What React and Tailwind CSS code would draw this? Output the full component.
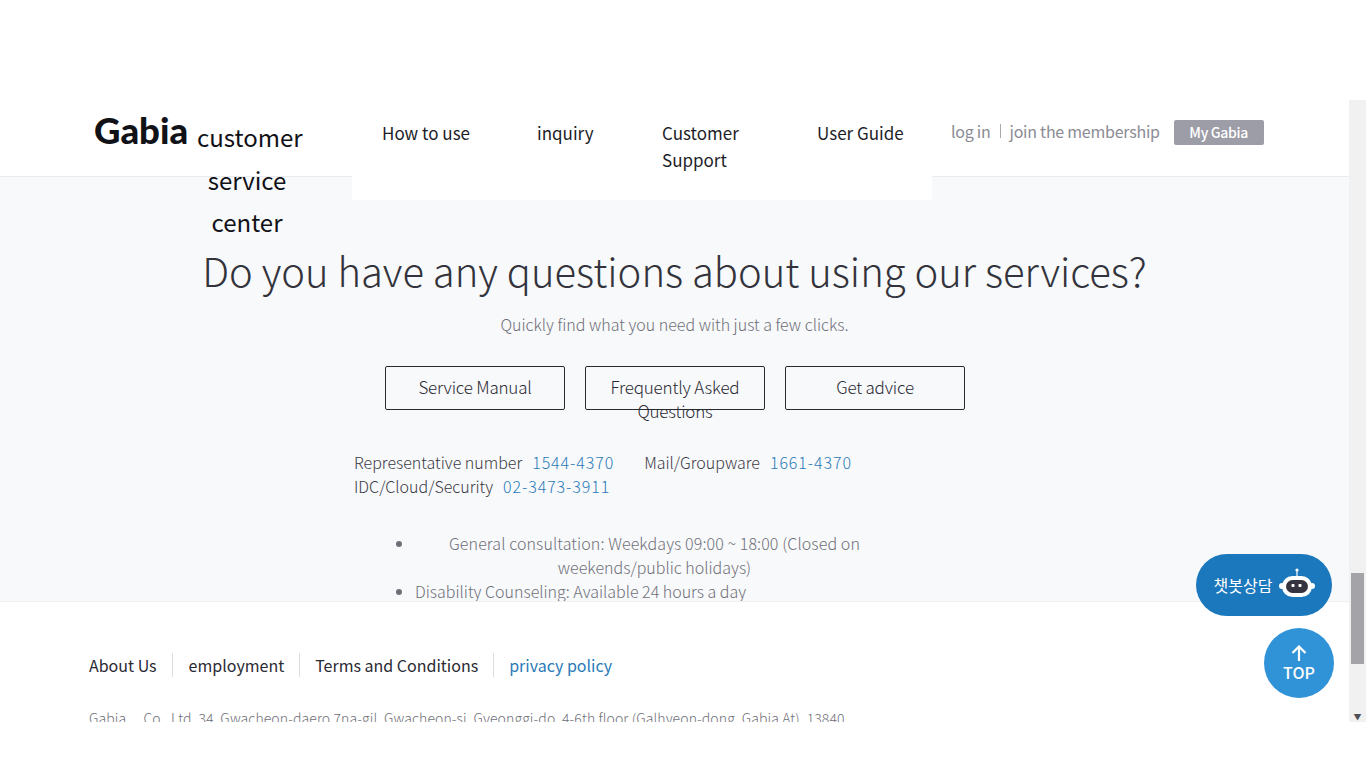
const font = "font-['Noto_Sans_CJK_KR',sans-serif]";

function NavItem({ children, className }) {
  return <a className={`text-[17px] leading-[27px] text-[#1d1d28] ${className}`}>{children}</a>;
}

function ChatBot() {
  return (
    <svg className="-mt-[2px]" width="36" height="32" viewBox="0 0 36 32">
      <line x1="18" y1="2" x2="18" y2="9" stroke="#fff" strokeWidth="1.2" />
      <circle cx="18" cy="2" r="1.6" fill="#fff" />
      <circle cx="3" cy="18" r="3" fill="#fff" />
      <circle cx="33" cy="18" r="3" fill="#fff" />
      <rect x="3" y="8" width="30" height="21" rx="10.5" fill="#fff" />
      <rect x="7" y="12" width="22" height="13" rx="6.5" fill="#35333f" />
      <rect x="12.5" y="16" width="3" height="3" rx="0.8" fill="#fff" />
      <rect x="19.5" y="16" width="3" height="3" rx="0.8" fill="#fff" />
    </svg>
  );
}

export default function App() {
  return (
    <div className={`relative h-screen w-full overflow-hidden bg-white ${font}`}>
      <div className="mt-[100px] flex h-[622px]">
        <div className="min-w-0 flex-1 overflow-hidden">
          <header className="relative z-10 flex h-[77px] items-start border-b border-[#e9ebef] bg-white pl-[94px]">
            <div className="mt-[5px] w-[98px] font-['Lato',sans-serif] text-[36.5px] font-black leading-[50px] text-[#111118]">Gabia</div>
            <div className="mt-[16px] w-[110px] text-center text-[24px] leading-[42.5px] text-[#111118]">
              <span className="block pl-[5px]">customer</span>
              <span className="block">service</span>
              <span className="block">center</span>
            </div>
            <nav className="ml-[50px] flex h-[100px] w-[580px] items-start bg-white pt-[19px] pl-[30px]">
              <NavItem className="w-[155px]">How to use</NavItem>
              <NavItem className="w-[125px]">inquiry</NavItem>
              <NavItem className="mr-[55px] w-[100px]">Customer Support</NavItem>
              <NavItem>User Guide</NavItem>
            </nav>
            <div className="ml-[19px] mt-[20px] flex items-center text-[#8b8b94]">
              <span className="-mt-[2px] text-[16px] leading-[25px] tracking-[-0.25px]">log in</span>
              <span className="mx-[9px] h-[14px] w-px -translate-y-[2px] bg-[#a9a9b0]" />
              <span className="-mt-[2px] mr-[14px] text-[16px] leading-[25px] tracking-[-0.25px]">join the membership</span>
              <span className="flex h-[25px] w-[90px] items-center justify-center rounded-[2px] bg-[#9d9da8] text-[14px] font-medium tracking-[-0.3px] text-white">My Gabia</span>
            </div>
          </header>

          <section className="h-[425px] overflow-hidden border-b border-[#eff0f2] bg-[#f8f9fb] pt-[63px] text-center">
            <h1 className="text-[40px] font-light leading-[60px] text-[#33333c]">Do you have any questions about using our services?</h1>
            <p className="mt-[12px] text-[16px] font-light leading-[24px] text-[#6f6f78]">Quickly find what you need with just a few clicks.</p>

            <div className="mt-[30px] flex justify-center gap-[20px] pl-[1px] text-[17px] leading-[24px] tracking-[-0.2px] text-[#2a2a33]">
              <button className="h-[44px] w-[180px] rounded-[2px] border border-[#2a2a33] pb-[2px] font-light">Service Manual</button>
              <button className="h-[44px] w-[180px] self-start rounded-[2px] border border-[#2a2a33] px-[20px] pt-[8px] align-top font-light">
                <span className="block">Frequently Asked Questions</span>
              </button>
              <button className="h-[44px] w-[180px] rounded-[2px] border border-[#2a2a33] pb-[2px] font-light">Get advice</button>
            </div>

            <div className="ml-[354px] mt-[40px] w-[520px] text-left text-[16px] font-light leading-[24px] text-[#3a3a44]">
              <span>Representative number</span>
              <span className="ml-[10px] tracking-[0.9px] text-[#2a7ab8]">1544-4370</span>
              <span className="ml-[30px]">Mail/Groupware</span>
              <span className="ml-[10px] tracking-[0.9px] text-[#2a7ab8]">1661-4370</span>
              <br />
              <span>IDC/Cloud/Security</span>
              <span className="ml-[10px] tracking-[0.9px] text-[#2a7ab8]">02-3473-3911</span>
            </div>

            <ul className="ml-[415px] mt-[33px] w-[479px] list-disc text-center text-[16px] font-light leading-[24px] text-[#6f6f78] marker:text-[#6f6f78]">
              <li><span className="tracking-[0.1px]">General consultation: Weekdays 09:00 ~ 18:00 (Closed on</span> weekends/public holidays)</li>
              <li className="text-left">Disability Counseling: Available 24 hours a day</li>
            </ul>
          </section>

          <footer className="bg-white px-[89px] pt-[51px]">
            <div className="flex text-[16px] leading-[24px] text-[#2a2a33]">
              <a className="border-r border-[#dcdee2] pr-[15px]">About Us</a>
              <a className="border-r border-[#dcdee2] pl-[16px] pr-[15px]">employment</a>
              <a className="border-r border-[#dcdee2] pl-[15px] pr-[15px]">Terms and Conditions</a>
              <a className="pl-[15px] text-[#2a7ab8]">privacy policy</a>
            </div>
            <p className="mt-[30px] text-[14px] font-light leading-[22px] tracking-[0.1px] text-[#6f6f78]">
              Gabia <span className="ml-[14px]">Co., Ltd. 34, Gwacheon-daero 7na-gil, Gwacheon-si, Gyeonggi-do, 4-6th floor (Galhyeon-dong, Gabia At), 13840</span>
            </p>
          </footer>
        </div>

        <div className="flex h-full w-[17px] shrink-0 flex-col bg-[#f1f1f1]">
          <div className="mt-[473px] h-[91px] w-[13px] self-center bg-[#a3a3a8]" />
          <div className="mt-auto flex h-[17px] items-end justify-center pb-[1px] text-[8px] leading-none text-[#505058]">▼</div>
        </div>
      </div>

      <a className="absolute left-[1196px] top-[554px] flex h-[62px] w-[136px] items-center justify-center gap-[7px] rounded-full bg-[#1c78bd] pl-[1px] text-[16px] text-white">
        챗봇상담
        <ChatBot />
      </a>
      <a className="absolute left-[1264px] top-[628px] flex h-[70px] w-[70px] flex-col items-center justify-center rounded-full bg-[#3193d7] pt-[2px] text-white">
        <svg width="18" height="16" viewBox="0 0 18 16" fill="none" stroke="#fff" strokeWidth="2.2">
          <path d="M9 16V2M2.5 8 9 1.5 15.5 8" />
        </svg>
        <span className="text-[16px] font-medium leading-[22px]">TOP</span>
      </a>
    </div>
  );
}
